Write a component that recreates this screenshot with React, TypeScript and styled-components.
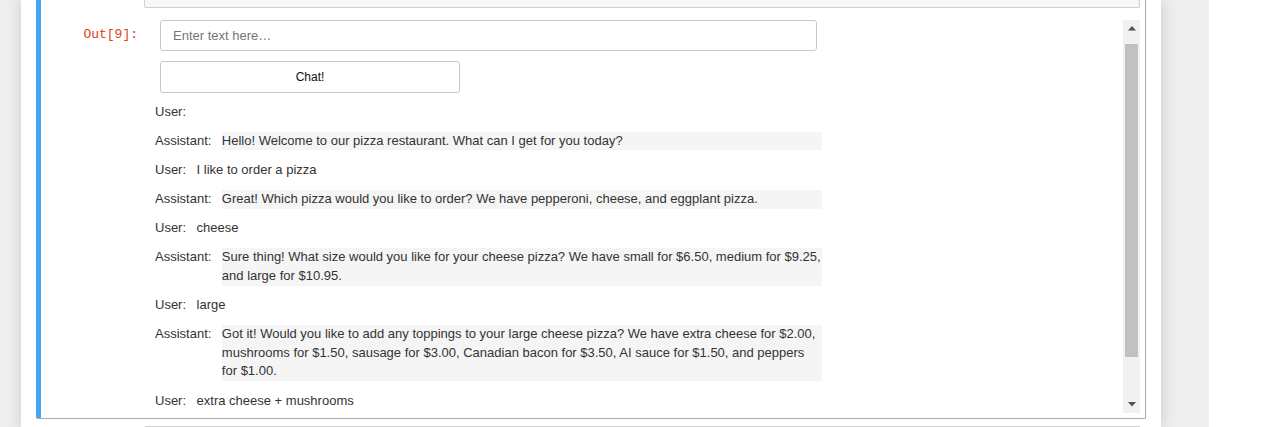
import React from "react";
import styled, { createGlobalStyle } from "styled-components";

const Global = createGlobalStyle`
  html, body { margin: 0; padding: 0; }
  body {
    background: #eeeeee;
    font-family: "Liberation Sans", Arial, Helvetica, sans-serif;
    overflow: hidden;
  }
`;

const Page = styled.div`
  display: flex;
  height: 427px;
  overflow: hidden;
`;

const LeftGutter = styled.div`
  width: 21px;
  flex: none;
`;

const NotebookContainer = styled.div`
  width: 1140px;
  flex: none;
  background: #fff;
  box-shadow: 0 0 12px 1px rgba(87, 87, 87, 0.2);
  padding: 0 15px;
  box-sizing: border-box;
  position: relative;
  z-index: 1;
`;

const RightGutter = styled.div`
  width: 48px;
  flex: none;
`;

const RightBlank = styled.div`
  flex: 1;
  background: #fff;
`;

const Cell = styled.div`
  display: flex;
  flex-direction: column;
  border: 1px solid #ababab;
  border-top: none;
  border-left: none;
  border-radius: 0 0 2px 2px;
  padding: 0 5px 5px 5px;
  background: linear-gradient(to right, #42a5f5 0, #42a5f5 5px, transparent 5px);
`;

const InputRow = styled.div`
  display: flex;
`;

const PromptColumn = styled.div`
  width: 103px;
  flex: none;
  box-sizing: border-box;
  text-align: right;
  padding-right: 6px;
  font-family: "Liberation Mono", "DejaVu Sans Mono", monospace;
  font-size: 13px;
  color: #d84315;
`;

const InputArea = styled.div`
  flex: 1;
  height: 7px;
  background: #f7f7f7;
  border: 1px solid #cfcfcf;
  border-top: none;
  border-radius: 0 0 2px 2px;
`;

const OutputRow = styled.div`
  display: flex;
  margin-top: 12px;
  height: 393px;
`;

const OutPrompt = styled(PromptColumn)`
  padding-top: 7px;
  line-height: 16px;
`;

const OutputScroller = styled.div`
  flex: 1;
  display: flex;
  min-width: 0;
`;

const OutputContent = styled.div`
  flex: 1;
  overflow: hidden;
  display: flex;
  flex-direction: column;
  align-items: flex-start;
`;

const TextInput = styled.input`
  margin-left: 16px;
  width: 657px;
  height: 31px;
  box-sizing: border-box;
  border: 1px solid #c8c8c8;
  border-radius: 3px;
  padding: 0 12px;
  font-family: "Liberation Sans", Arial, sans-serif;
  font-size: 13px;
  color: #333;
  background: #fff;
  outline: none;
  &::placeholder { color: #767676; }
`;

const ChatButton = styled.button`
  margin: 10px 0 0 16px;
  width: 300px;
  height: 32px;
  box-sizing: border-box;
  border: 1px solid #c8c8c8;
  border-radius: 3px;
  background: #fff;
  font-family: "Liberation Sans", Arial, sans-serif;
  font-size: 12px;
  color: #111;
  padding: 0;
`;

const Conversation = styled.div`
  margin: 9.7px 0 0 11px;
  display: flex;
  flex-direction: column;
  gap: 10.6px;
`;

const Row = styled.div`
  display: flex;
  align-items: flex-start;
  gap: 10.5px;
  font-size: 13px;
  line-height: 18.57px;
  color: #333;
`;

const Speaker = styled.div`
  flex: none;
`;

const Message = styled.div<{ $assistant: boolean }>`
  width: 600px;
  min-height: 18.57px;
  background: ${(p) => (p.$assistant ? "#f5f5f5" : "transparent")};
`;

const Scrollbar = styled.div`
  width: 17px;
  flex: none;
  background: #f1f1f1;
  display: flex;
  flex-direction: column;
`;

const ScrollButton = styled.div`
  height: 17px;
  flex: none;
  display: flex;
  align-items: center;
  justify-content: center;
`;

const Track = styled.div`
  flex: 1;
  padding: 7px 2px 0 2px;
`;

const Thumb = styled.div`
  height: 313px;
  background: #c1c1c1;
`;

const NextCell = styled.div`
  margin: 7px 5px 0 108px;
  height: 20px;
  background: #f7f7f7;
  border: 1px solid #cfcfcf;
  border-radius: 2px;
`;

const Arrow = ({ down }: { down?: boolean }) => (
  <svg width="8" height="5" viewBox="0 0 8 5">
    <polygon points={down ? "0,0 8,0 4,4.5" : "0,4.5 8,4.5 4,0"} fill="#505050" />
  </svg>
);

const messages: [string, string][] = [
  ["User:", ""],
  ["Assistant:", "Hello! Welcome to our pizza restaurant. What can I get for you today?"],
  ["User:", "I like to order a pizza"],
  ["Assistant:", "Great! Which pizza would you like to order? We have pepperoni, cheese, and eggplant pizza."],
  ["User:", "cheese"],
  ["Assistant:", "Sure thing! What size would you like for your cheese pizza? We have small for $6.50, medium for $9.25, and large for $10.95."],
  ["User:", "large"],
  ["Assistant:", "Got it! Would you like to add any toppings to your large cheese pizza? We have extra cheese for $2.00, mushrooms for $1.50, sausage for $3.00, Canadian bacon for $3.50, AI sauce for $1.50, and peppers for $1.00."],
  ["User:", "extra cheese + mushrooms"],
];

export default function App() {
  return (
    <>
      <Global />
      <Page>
        <LeftGutter />
        <NotebookContainer>
          <Cell>
            <InputRow>
              <PromptColumn />
              <InputArea />
            </InputRow>
            <OutputRow>
              <OutPrompt>Out[9]:</OutPrompt>
              <OutputScroller>
                <OutputContent>
                  <TextInput placeholder="Enter text here…" />
                  <ChatButton>Chat!</ChatButton>
                  <Conversation>
                    {messages.map(([who, text], i) => (
                      <Row key={i}>
                        <Speaker>{who}</Speaker>
                        <Message $assistant={who === "Assistant:"}>{text}</Message>
                      </Row>
                    ))}
                  </Conversation>
                </OutputContent>
                <Scrollbar>
                  <ScrollButton><Arrow /></ScrollButton>
                  <Track><Thumb /></Track>
                  <ScrollButton><Arrow down /></ScrollButton>
                </Scrollbar>
              </OutputScroller>
            </OutputRow>
          </Cell>
          <NextCell />
        </NotebookContainer>
        <RightGutter />
        <RightBlank />
      </Page>
    </>
  );
}
